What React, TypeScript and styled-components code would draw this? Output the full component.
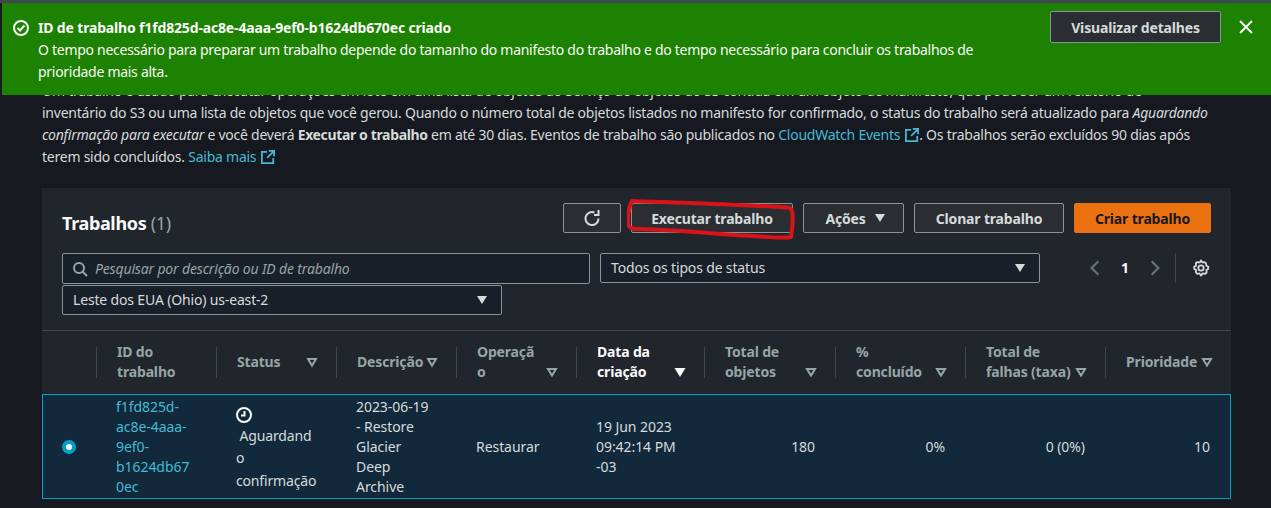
import React from 'react';
import styled, { createGlobalStyle } from 'styled-components';

const GlobalStyle = createGlobalStyle`
  html, body {
    margin: 0;
    background: #16191f;
  }
  body {
    font-family: "Noto Sans", "Liberation Sans", sans-serif;
    font-size: 14px;
    line-height: 22px;
    letter-spacing: -0.16px;
    color: #d5dbdb;
  }
`;

const Page = styled.div`
  width: 1271px;
  height: 508px;
  overflow: hidden;
  border-top: 3px solid #414750;
  box-sizing: border-box;
`;

const Flash = styled.div`
  position: relative;
  z-index: 2;
  display: flex;
  align-items: flex-start;
  height: 92px;
  margin-left: 2px;
  padding: 14px 0 0 11px;
  box-sizing: border-box;
  background: #1d8102;
  color: #fafafa;
`;

const FlashIcon = styled.div`
  display: flex;
  width: 16px;
  height: 22px;
  align-items: center;
  margin-right: 9px;
`;

const FlashBody = styled.div`
  width: 1012px;
  white-space: nowrap;
  letter-spacing: -0.28px;
`;

const FlashTitle = styled.div`
  font-weight: 700;
  letter-spacing: -0.16px;
`;

const FlashAction = styled.button`
  margin-top: -6px;
  width: 171px;
  height: 32px;
  padding: 0;
  border: 1px solid #879596;
  border-radius: 2px;
  background: #2a2e33;
  color: #d5dbdb;
  font: 700 14px "Noto Sans", sans-serif;
  letter-spacing: inherit;
`;

const FlashClose = styled.div`
  display: flex;
  margin: 2px 0 0 17px;
`;

const Content = styled.main`
  margin-top: -15px;
  padding: 0 40px 0 42px;
`;

const Intro = styled.p`
  margin: 0 0 20px;
  white-space: nowrap;
  letter-spacing: -0.24px;

  strong {
    letter-spacing: -0.36px;
  }
`;

const Link = styled.a`
  color: #44b9d6;
`;

const ExternalIcon = styled.svg`
  display: inline-block;
  width: 14px;
  height: 14px;
  margin-left: 5px;
  vertical-align: -2px;
`;

const Card = styled.section`
  background: #21252c;
`;

const CardHeader = styled.div`
  display: flex;
  align-items: flex-start;
  padding: 15px 20px 0;
  height: 30px;
`;

const Title = styled.h2`
  flex: 1;
  margin: 9px 0 0;
  font-size: 18px;
  line-height: 22px;
  font-weight: 700;
  letter-spacing: -0.35px;
  color: #fafafa;
`;

const Count = styled.span`
  font-weight: 400;
  color: #95a5a6;
`;

const Actions = styled.div`
  display: flex;
  gap: 10px;
`;

const Button = styled.button<{ $width: number; $primary?: boolean }>`
  display: flex;
  align-items: center;
  justify-content: center;
  gap: 8px;
  width: ${(p) => p.$width}px;
  height: 30px;
  padding: 0;
  border: 1px solid ${(p) => (p.$primary ? '#ec7211' : '#879596')};
  border-radius: 2px;
  background: ${(p) => (p.$primary ? '#ec7211' : '#2a2e33')};
  color: ${(p) => (p.$primary ? '#16191f' : '#d5dbdb')};
  font: 700 14px "Noto Sans", sans-serif;
  letter-spacing: inherit;
`;

const MenuButton = styled(Button)`
  padding-left: 4px;
`;

const Annotated = styled.div`
  position: relative;
`;

const Scribble = styled.svg`
  position: absolute;
  left: -4px;
  top: -5px;
  width: 170px;
  height: 42px;
  pointer-events: none;
`;

const Filters = styled.div`
  display: flex;
  flex-wrap: wrap;
  align-items: flex-start;
  column-gap: 10px;
  row-gap: 1px;
  padding: 20px 20px 15px;
`;

const SearchBox = styled.div`
  display: flex;
  align-items: center;
  gap: 7px;
  width: 528px;
  height: 31px;
  padding: 0 9px;
  box-sizing: border-box;
  border: 1px solid #879596;
  border-radius: 2px;
  background: #1a2029;
  color: #95a5a6;
  font-style: italic;
`;

const Select = styled.div<{ $width: number }>`
  display: flex;
  align-items: center;
  justify-content: space-between;
  width: ${(p) => p.$width}px;
  height: 30px;
  padding: 0 13px 0 10px;
  box-sizing: border-box;
  border: 1px solid #879596;
  border-radius: 2px;
  background: #1a2029;
`;

const Pager = styled.div`
  display: flex;
  align-items: center;
  height: 30px;
  margin-left: 36px;
`;

const PagerNumber = styled.span`
  width: 42px;
  text-align: center;
  font-weight: 700;
  color: #fafafa;
`;

const PagerDivider = styled.div`
  width: 1px;
  height: 30px;
  margin: 0 16px 0 11px;
  background: #414750;
`;

const Table = styled.div`
  border-top: 1px solid #414750;
`;

const HeadRow = styled.div`
  display: grid;
  grid-template-columns: 54px 120px 120px 120px 120px 128px 131px 130px 140px 1fr;
  height: 63px;
  align-items: center;
`;

const HeadCell = styled.div<{ $active?: boolean }>`
  display: flex;
  align-items: center;
  justify-content: space-between;
  height: 31px;
  box-sizing: border-box;
  line-height: 20px;
  padding: 0 18px 2px 20px;
  border-left: 1px solid #414750;
  font-weight: 700;
  color: ${(p) => (p.$active ? '#fafafa' : '#95a5a6')};
`;

const SortCaret = styled.svg<{ $low?: boolean }>`
  flex: none;
  width: 12px;
  height: 12px;
  align-self: ${(p) => (p.$low ? 'flex-end' : 'center')};
  margin-bottom: ${(p) => (p.$low ? '-2px' : '0')};
`;

const BodyRow = styled.div`
  display: grid;
  grid-template-columns: 53px 120px 120px 120px 120px 128px 131px 130px 140px 1fr;
  height: 105px;
  box-sizing: border-box;
  border: 1px solid #00a1c9;
  background: #12293b;
  line-height: 20px;
  letter-spacing: -0.06px;
  align-items: center;
`;

const Cell = styled.div<{ $right?: boolean }>`
  padding: 0 20px;
  text-align: ${(p) => (p.$right ? 'right' : 'left')};
`;

const StatusCell = styled(Cell)`
  padding-top: 6px;
  letter-spacing: -0.16px;
`;

const RadioCell = styled.div`
  display: flex;
  padding-left: 19px;
`;

const Radio = styled.div`
  width: 14px;
  height: 14px;
  box-sizing: border-box;
  border: 4px solid #00a1c9;
  border-radius: 50%;
  background: #fafafa;
`;

const StatusText = styled.div`
  line-height: 22.5px;
`;

const StatusIcon = styled.svg`
  display: block;
  width: 16px;
  height: 16px;
  margin-bottom: 2px;
`;

const Caret = ({ color = '#d5dbdb' }: { color?: string }) => (
  <svg width="12" height="10" viewBox="0 0 12 10">
    <path d="M1 1h10L6 9z" fill={color} />
  </svg>
);

const External = () => (
  <ExternalIcon viewBox="0 0 16 16" fill="none" stroke="#44b9d6" strokeWidth="2">
    <path d="M14 9v6H1V2h6" />
    <path d="M9 1h6v6M15 1 7 9" />
  </ExternalIcon>
);

const Sort = ({ low }: { low?: boolean }) => (
  <SortCaret $low={low} viewBox="0 0 12 12" fill="none" stroke="#95a5a6" strokeWidth="2">
    <path d="M2 3h8L6 9.5z" />
  </SortCaret>
);

const Chevron = ({ d }: { d: string }) => (
  <svg width="18" height="18" viewBox="0 0 16 16" fill="none" stroke="#687078" strokeWidth="2">
    <path d={d} />
  </svg>
);

export default function App(): JSX.Element {
  return (
    <Page>
      <GlobalStyle />
      <Flash>
        <FlashIcon>
          <svg width="16" height="16" viewBox="0 0 16 16" fill="none" stroke="#fafafa" strokeWidth="2">
            <circle cx="8" cy="8" r="7" />
            <path d="m4.5 8 2.5 2.5 4.5-5" />
          </svg>
        </FlashIcon>
        <FlashBody>
          <FlashTitle>ID de trabalho f1fd825d-ac8e-4aaa-9ef0-b1624db670ec criado</FlashTitle>
          O tempo necessário para preparar um trabalho depende do tamanho do manifesto do trabalho e do tempo necessário para concluir os trabalhos de
          <br />
          prioridade mais alta.
        </FlashBody>
        <FlashAction>Visualizar detalhes</FlashAction>
        <FlashClose>
          <svg width="16" height="16" viewBox="0 0 16 16" fill="none" stroke="#fafafa" strokeWidth="2">
            <path d="m2 2 12 12M14 2 2 14" />
          </svg>
        </FlashClose>
      </Flash>
      <Content>
        <Intro>
          Um trabalho é usado para executar operações em lote em uma lista de objetos do Serviço de objetos do S3 contida em um objeto de manifesto, que pode ser um relatório de
          <br />
          inventário do S3 ou uma lista de objetos que você gerou. Quando o número total de objetos listados no manifesto for confirmado, o status do trabalho será atualizado para <em>Aguardando</em>
          <br />
          <em>confirmação para executar</em> e você deverá <strong>Executar o trabalho</strong> em até 30 dias. Eventos de trabalho são publicados no <Link>CloudWatch Events</Link>
          <External />. Os trabalhos serão excluídos 90 dias após
          <br />
          terem sido concluídos. <Link>Saiba mais</Link>
          <External />
        </Intro>
        <Card>
          <CardHeader>
            <Title>
              Trabalhos <Count>(1)</Count>
            </Title>
            <Actions>
              <Button $width={58} aria-label="Atualizar">
                <svg width="16" height="18" viewBox="0 0 16 18" fill="none" stroke="#d5dbdb" strokeWidth="2">
                  <path d="M14.5 9.5A6.5 6.5 0 1 1 10.5 3.5" />
                  <path d="M14.5 1v5H10" />
                </svg>
              </Button>
              <Annotated>
                <Button $width={162}>Executar trabalho</Button>
                <Scribble viewBox="0 0 170 42" fill="none">
                  <path
                    d="M5 3C30 4 70 5 110 7C135 8 155 9 163 10C167 12 166 28 164 39C155 41 130 38 108 37C80 35 50 32 12 31C5 31 1 31 1 23C1 14 3 7 5 3Z"
                    stroke="#dc1219"
                    strokeWidth="4"
                    strokeLinejoin="round"
                  />
                </Scribble>
              </Annotated>
              <MenuButton $width={101}>
                Ações <Caret />
              </MenuButton>
              <Button $width={150}>Clonar trabalho</Button>
              <Button $width={137} $primary>
                Criar trabalho
              </Button>
            </Actions>
          </CardHeader>
          <Filters>
            <SearchBox>
              <svg width="16" height="16" viewBox="0 0 16 16" fill="none" stroke="#95a5a6" strokeWidth="2">
                <circle cx="7" cy="7" r="5" />
                <path d="m15 15-4.5-4.5" />
              </svg>
              Pesquisar por descrição ou ID de trabalho
            </SearchBox>
            <Select $width={440}>
              Todos os tipos de status <Caret />
            </Select>
            <Pager>
              <Chevron d="m11 2-6 6 6 6" />
              <PagerNumber>1</PagerNumber>
              <Chevron d="m5 2 6 6-6 6" />
              <PagerDivider />
              <svg width="18" height="18" viewBox="0 0 16 16" fill="none" stroke="#d5dbdb" strokeWidth="1.6">
                <path d="M8 1.2 9 3l2.2-.3 1.3 1.2L12.8 6l1.7 1-.1 1.9-1.6 1 .2 2.1-1.3 1.2-2.2-.4L8 14.8l-1.2-2-2 .4-1.4-1.3.3-2L2 8.9 1.9 7l1.7-1-.2-2.2 1.3-1.1L7 3z" strokeLinejoin="round" />
                <circle cx="8" cy="8" r="2.4" />
              </svg>
            </Pager>
            <Select $width={440}>
              Leste dos EUA (Ohio) us-east-2 <Caret />
            </Select>
          </Filters>
          <Table>
            <HeadRow>
              <div />
              <HeadCell>
                <span>
                  ID do
                  <br />
                  trabalho
                </span>
              </HeadCell>
              <HeadCell>
                <span>Status</span>
                <Sort />
              </HeadCell>
              <HeadCell>
                <span>Descrição</span>
                <Sort />
              </HeadCell>
              <HeadCell>
                <span>
                  Operaçã
                  <br />o
                </span>
                <Sort low />
              </HeadCell>
              <HeadCell $active>
                <span>
                  Data da
                  <br />
                  criação
                </span>
                <SortCaret $low viewBox="0 0 12 12">
                  <path d="M.5 2h11L6 11z" fill="#fafafa" />
                </SortCaret>
              </HeadCell>
              <HeadCell>
                <span>
                  Total de
                  <br />
                  objetos
                </span>
                <Sort low />
              </HeadCell>
              <HeadCell>
                <span>
                  %
                  <br />
                  concluído
                </span>
                <Sort low />
              </HeadCell>
              <HeadCell>
                <span>
                  Total de
                  <br />
                  falhas (taxa)
                </span>
                <Sort low />
              </HeadCell>
              <HeadCell>
                <span>Prioridade</span>
                <Sort />
              </HeadCell>
            </HeadRow>
            <BodyRow>
              <RadioCell>
                <Radio />
              </RadioCell>
              <Cell>
                <Link>
                  f1fd825d-
                  <br />
                  ac8e-4aaa-
                  <br />
                  9ef0-
                  <br />
                  b1624db67
                  <br />
                  0ec
                </Link>
              </Cell>
              <StatusCell>
                <StatusIcon viewBox="0 0 16 16" fill="none" stroke="#fafafa" strokeWidth="2">
                  <circle cx="8" cy="8" r="7" />
                  <path d="M8.5 4v4.5H5" />
                </StatusIcon>
                <StatusText>
                  &nbsp;Aguardand
                  <br />o
                  <br />
                  confirmação
                </StatusText>
              </StatusCell>
              <Cell>
                2023-06-19
                <br />- Restore
                <br />
                Glacier
                <br />
                Deep
                <br />
                Archive
              </Cell>
              <Cell>Restaurar</Cell>
              <Cell>
                19 Jun 2023
                <br />
                09:42:14 PM
                <br />
                -03
              </Cell>
              <Cell $right>180</Cell>
              <Cell $right>0%</Cell>
              <Cell $right>0 (0%)</Cell>
              <Cell $right>10</Cell>
            </BodyRow>
          </Table>
        </Card>
      </Content>
    </Page>
  );
}
